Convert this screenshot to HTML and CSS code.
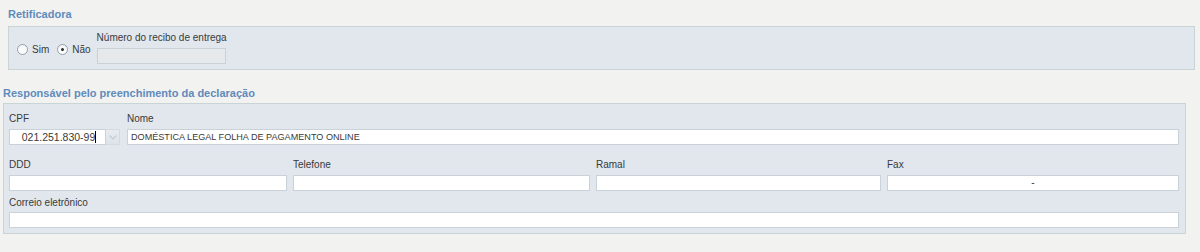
FILE: index.html
```html
<!DOCTYPE html>
<html lang="pt">
<head>
<meta charset="utf-8">
<link rel="stylesheet" href="styles.css">
</head>
<body>
<div class="page">
  <div class="sec-title t1">Retificadora</div>
  <div class="panel p1">
    <div class="radios">
      <span class="radio"></span><span class="rlabel">Sim</span>
      <span class="radio on"></span><span class="rlabel last">Não</span>
    </div>
    <div class="field recibo">
      <div class="lbl">Número do recibo de entrega</div>
      <div class="inp disabled"></div>
    </div>
  </div>

  <div class="sec-title t2">Responsável pelo preenchimento da declaração</div>
  <div class="panel p2">
    <div class="row r1">
      <div class="field cpf">
        <div class="lbl">CPF</div>
        <div class="combo">
          <div class="inp cpfinp">021.251.830-99<span class="caret"></span></div>
          <div class="dd"><svg width="8" height="5" viewBox="0 0 8 5"><path d="M0.5 0.5 L4 4 L7.5 0.5" fill="none" stroke="#c2ccd4" stroke-width="1.2"/></svg></div>
        </div>
      </div>
      <div class="field nome">
        <div class="lbl">Nome</div>
        <div class="inp caps">DOMÉSTICA LEGAL FOLHA DE PAGAMENTO ONLINE</div>
      </div>
    </div>
    <div class="row r2">
      <div class="field"><div class="lbl">DDD</div><div class="inp"></div></div>
      <div class="field"><div class="lbl">Telefone</div><div class="inp"></div></div>
      <div class="field"><div class="lbl">Ramal</div><div class="inp"></div></div>
      <div class="field"><div class="lbl">Fax</div><div class="inp center">-</div></div>
    </div>
    <div class="row r3">
      <div class="field"><div class="lbl">Correio eletrônico</div><div class="inp"></div></div>
    </div>
  </div>
</div>
</body>
</html>
```
FILE: styles.css
```css
html, body {
  margin: 0;
  padding: 0;
  background: #f2f2f1;
}
body {
  font-family: "Liberation Sans", Arial, sans-serif;
  font-size: 10px;
  color: #3a3a3a;
  width: 1200px;
  height: 252px;
  overflow: hidden;
}
.page {
  display: flex;
  flex-direction: column;
}
.sec-title {
  font-weight: bold;
  font-size: 11px;
  color: #5f8bbb;
  line-height: 13px;
}
.t1 {
  margin: 8px 0 0 8px;
  height: 13px;
}
.t2 {
  margin: 17px 0 0 3px;
  height: 13px;
}
.panel {
  background: #e1e7ed;
  border: 1px solid #c9d4d6;
  box-sizing: border-box;
}
.p1 {
  margin: 5px 5px 0 8px;
  height: 44px;
  display: flex;
  align-items: flex-start;
  padding: 5px 0 0 8px;
}
.radios {
  display: flex;
  align-items: center;
  margin-top: 11px;
  height: 12px;
}
.radio {
  width: 11px;
  height: 11px;
  border-radius: 50%;
  border: 1px solid #93a1ac;
  background: linear-gradient(#f4f6f8, #ffffff);
  box-sizing: border-box;
  position: relative;
}
.radio.on::after {
  content: "";
  position: absolute;
  left: 3px;
  top: 3px;
  width: 3px;
  height: 3px;
  border-radius: 50%;
  background: #2b2b2b;
}
.rlabel {
  margin: 0 8px 0 4px;
}
.rlabel.last {
  margin-right: 6px;
}
.field {
  display: flex;
  flex-direction: column;
}
.lbl {
  line-height: 12px;
  height: 12px;
  white-space: nowrap;
}
.recibo .lbl {
  margin-bottom: 4px;
}
.recibo .inp {
  width: 129px;
}
.inp {
  height: 16px;
  box-sizing: border-box;
  border: 1px solid #c8d2d8;
  background: #ffffff;
  line-height: 14px;
  padding: 0 3px;
  white-space: nowrap;
  overflow: hidden;
}
.inp.caps {
  font-size: 9.1px;
}
.inp.disabled {
  background: #e5e9ec;
}
.inp.center {
  text-align: center;
}
.p2 {
  margin: 3px 14px 0 3px;
  height: 131px;
  padding: 9px 6px 0 5px;
  display: flex;
  flex-direction: column;
}
.row {
  display: flex;
}
.r1 .lbl, .r2 .lbl, .r3 .lbl {
  margin-bottom: 4px;
}
.r1 {
  gap: 7px;
}
.combo {
  display: flex;
}
.cpfinp {
  width: 97px;
  text-align: center;
  padding: 0 0 0 3px;
  font-size: 10.5px;
}
.caret {
  display: inline-block;
  width: 1px;
  height: 12px;
  background: #000;
  vertical-align: -2px;
}
.dd {
  width: 14px;
  height: 16px;
  box-sizing: border-box;
  border: 1px solid #d3dbe0;
  border-left: none;
  background: linear-gradient(#e7ecf0, #dde3e8);
  display: flex;
  align-items: center;
  justify-content: center;
}
.nome {
  flex: 1;
}
.r2 {
  margin-top: 14px;
  display: grid;
  grid-template-columns: 278px 297px 285px 1fr;
  gap: 6px;
}
.r3 {
  margin-top: 6px;
}
.r3 .field {
  flex: 1;
}
.r3 .lbl {
  margin-bottom: 3px;
}
```
